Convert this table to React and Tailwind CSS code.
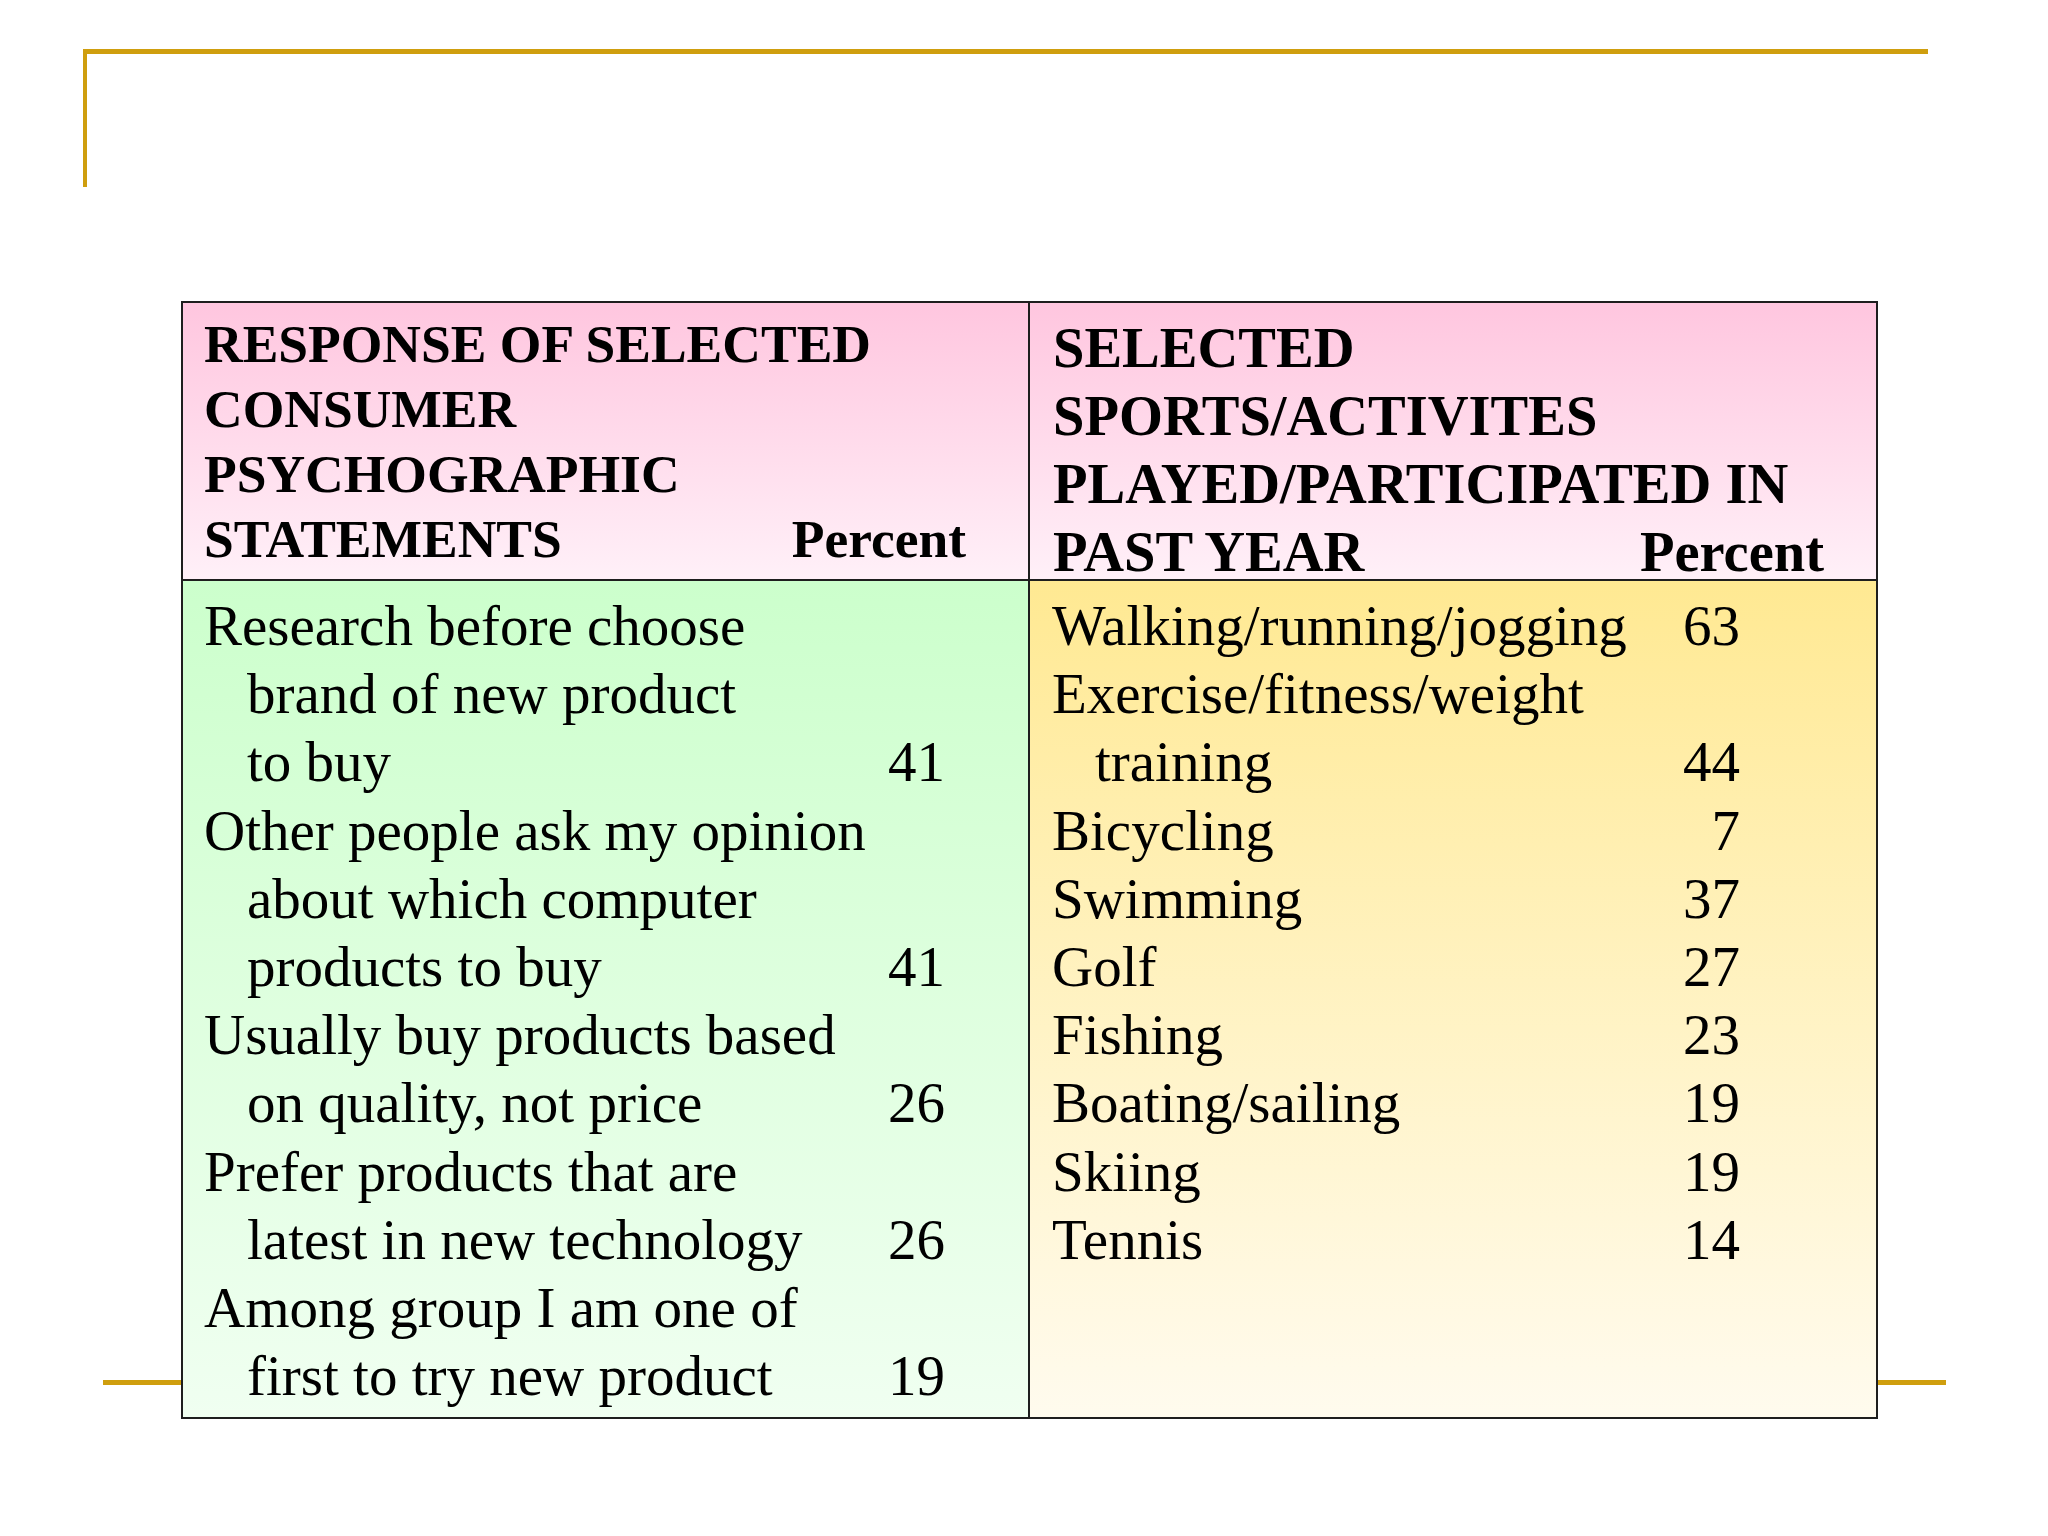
import React from 'react'

const leftRows = [
    { lines: ['Research before choose', 'brand of new product', 'to buy'], pct: '41' },
    { lines: ['Other people ask my opinion', 'about which computer', 'products to buy'], pct: '41' },
    { lines: ['Usually buy products based', 'on quality, not price'], pct: '26' },
    { lines: ['Prefer products that are', 'latest in new technology'], pct: '26' },
    { lines: ['Among group I am one of', 'first to try new product'], pct: '19' },
]

const rightRows = [
    { lines: ['Walking/running/jogging'], pct: '63' },
    { lines: ['Exercise/fitness/weight', 'training'], pct: '44' },
    { lines: ['Bicycling'], pct: '7' },
    { lines: ['Swimming'], pct: '37' },
    { lines: ['Golf'], pct: '27' },
    { lines: ['Fishing'], pct: '23' },
    { lines: ['Boating/sailing'], pct: '19' },
    { lines: ['Skiing'], pct: '19' },
    { lines: ['Tennis'], pct: '14' },
]

// one statement: first line flush, the rest indented, percent on the last line
const Row = ({ row }) => (
    <div>
        {row.lines.map((line, i) => {
            const last = i === row.lines.length - 1
            return (
                <div key={i} className={"flex justify-between " + (i > 0 ? "pl-[43px]" : "")}>
                    <span>{line}</span>
                    <span>{last ? row.pct : ''}</span>
                </div>
            )
        })}
    </div>
)

const App = () => {
    return (
        <div className="w-[2048px] h-[1536px] bg-white overflow-hidden font-['Liberation_Serif','Times_New_Roman',serif] text-black">

            {/* top corner bracket */}
            <div className="pt-[49px] pl-[83px]">
                <div className="w-[1845px] h-[138px] border-t-[5px] border-l-[4px] border-[#cf9e0e]" />
            </div>

            <div className="relative ml-[181px] mt-[114px] w-[1697px]">
                {/* bottom rule, runs behind the table */}
                <div className="absolute left-[-78px] top-[1079px] w-[1843px] h-[5px] bg-[#cf9e0e]" />

                <div className="relative grid grid-cols-[847px_1fr] border-2 border-[#1e1e1e]">

                    {/* header left */}
                    <div className="h-[278px] border-b-2 border-r-2 border-[#1e1e1e] bg-gradient-to-b from-[#ffc6df] to-[#fff0f8] pl-[21px] pr-[62px] pt-[9px] font-bold text-[53.5px] leading-[65px]">
                        <div>RESPONSE OF SELECTED</div>
                        <div>CONSUMER</div>
                        <div>PSYCHOGRAPHIC</div>
                        <div className="flex justify-between">
                            <span>STATEMENTS</span>
                            <span>Percent</span>
                        </div>
                    </div>

                    {/* header right */}
                    <div className="h-[278px] border-b-2 border-[#1e1e1e] bg-gradient-to-b from-[#ffc6df] to-[#fff0f8] pl-[23px] pr-[52px] pt-[11px] font-bold text-[56.5px] leading-[68px] whitespace-nowrap">
                        <div>SELECTED</div>
                        <div>SPORTS/ACTIVITES</div>
                        <div>PLAYED/PARTICIPATED IN</div>
                        <div className="flex justify-between">
                            <span>PAST YEAR</span>
                            <span>Percent</span>
                        </div>
                    </div>

                    {/* body left */}
                    <div className="h-[836px] border-r-2 border-[#1e1e1e] bg-gradient-to-b from-[#ccffcc] to-[#f0fff1] pl-[21px] pr-[83px] pt-[11px] text-[57px] leading-[68.2px] whitespace-nowrap">
                        {leftRows.map((row, i) => <Row key={i} row={row} />)}
                    </div>

                    {/* body right */}
                    <div className="h-[836px] bg-gradient-to-b from-[#ffe992] to-[#fffbee] pl-[22px] pr-[136px] pt-[11px] text-[57px] leading-[68.2px] whitespace-nowrap">
                        {rightRows.map((row, i) => <Row key={i} row={row} />)}
                    </div>
                </div>
            </div>
        </div>
    )
}

export default App
